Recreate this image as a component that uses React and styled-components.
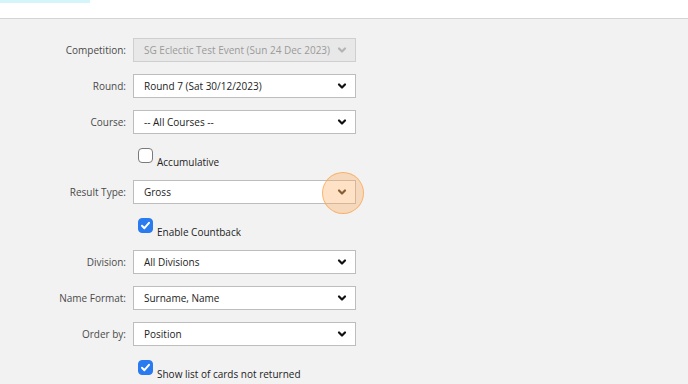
import React from "react";
import styled, { createGlobalStyle } from "styled-components";

const GlobalStyle = createGlobalStyle`
  html, body {
    margin: 0;
    padding: 0;
    background: #f2f2f2;
    font-family: "Open Sans", "Liberation Sans", sans-serif;
  }
`;

const Header = styled.div`
  height: 18px;
  background: #ffffff;
  border-bottom: 1px solid #d4d4d4;
`;

const TabLine = styled.div`
  width: 90px;
  height: 3px;
  background: #d4f6fb;
`;

const Form = styled.div`
  display: grid;
  grid-template-columns: 126px 223px;
  column-gap: 7px;
  row-gap: 12px;
  padding-top: 19px;
  align-items: center;
`;

const Label = styled.div`
  text-align: right;
  font-size: 10px;
  color: #4a4a4a;
  white-space: nowrap;
`;

const SelectBox = styled.div`
  position: relative;
  height: 24px;
  box-sizing: border-box;
  display: flex;
  align-items: center;
  justify-content: space-between;
  padding: 0 8px 0 10px;
  font-size: 10px;
  white-space: nowrap;
  background: ${({ disabled }) => (disabled ? "#e8e8e8" : "#ffffff")};
  border: 1px solid ${({ disabled }) => (disabled ? "#cfcfcf" : "#bdbdbd")};
  color: ${({ disabled }) => (disabled ? "#9a9a9a" : "#222222")};
`;

const Chevron = styled.svg`
  width: 10px;
  height: 10px;
  flex: none;
`;

const Highlight = styled.div`
  position: absolute;
  right: -9px;
  top: 50%;
  width: 40px;
  height: 40px;
  margin-top: -20px;
  border-radius: 50%;
  background: rgba(255, 170, 90, 0.35);
  border: 1.5px solid rgba(245, 165, 80, 0.75);
  pointer-events: none;
`;

const CheckRow = styled.div`
  grid-column: 2;
  height: 22px;
  display: flex;
  align-items: flex-end;
  padding-left: 5px;
  box-sizing: border-box;
  font-size: 10px;
  color: #222222;
`;

const Box = styled.span`
  width: 15px;
  height: 15px;
  box-sizing: border-box;
  border-radius: 4px;
  align-self: flex-start;
  margin-top: 2px;
  margin-right: 4px;
  display: flex;
  align-items: center;
  justify-content: center;
  background: ${({ checked }) => (checked ? "#2a7bf0" : "#ffffff")};
  border: 1px solid ${({ checked }) => (checked ? "#2a7bf0" : "#7a7a7a")};
`;

const CheckText = styled.span`
  line-height: 13px;
  margin-bottom: -1px;
`;

const ChevronIcon = ({ color }) => (
  <Chevron viewBox="0 0 10 10">
    <path
      d="M2 3.5 L5 6.5 L8 3.5"
      fill="none"
      stroke={color}
      strokeWidth="2.2"
      strokeLinecap="round"
      strokeLinejoin="round"
    />
  </Chevron>
);

const Select = ({ value, disabled, highlight }) => (
  <SelectBox disabled={disabled}>
    <span>{value}</span>
    <ChevronIcon color={disabled ? "#b4b4b4" : highlight ? "#4a3520" : "#111111"} />
    {highlight && <Highlight />}
  </SelectBox>
);

const Checkbox = ({ checked, label }) => (
  <CheckRow>
    <Box checked={checked}>
      {checked && (
        <svg width="11" height="11" viewBox="0 0 11 11">
          <path
            d="M2 5.8 L4.4 8.2 L9 2.8"
            fill="none"
            stroke="#ffffff"
            strokeWidth="2"
            strokeLinecap="round"
            strokeLinejoin="round"
          />
        </svg>
      )}
    </Box>
    <CheckText>{label}</CheckText>
  </CheckRow>
);

const fields = [
  { label: "Competition:", value: "SG Eclectic Test Event (Sun 24 Dec 2023)", disabled: true },
  { label: "Round:", value: "Round 7 (Sat 30/12/2023)" },
  { label: "Course:", value: "-- All Courses --" },
  { check: "Accumulative", checked: false },
  { label: "Result Type:", value: "Gross", highlight: true },
  { check: "Enable Countback", checked: true },
  { label: "Division:", value: "All Divisions" },
  { label: "Name Format:", value: "Surname, Name" },
  { label: "Order by:", value: "Position" },
  { check: "Show list of cards not returned", checked: true },
];

const App = () => {
  return (
    <>
      <GlobalStyle />
      <Header>
        <TabLine />
      </Header>
      <Form>
        {fields.map((f, i) =>
          f.check ? (
            <Checkbox key={i} checked={f.checked} label={f.check} />
          ) : (
            <React.Fragment key={i}>
              <Label>{f.label}</Label>
              <Select value={f.value} disabled={f.disabled} highlight={f.highlight} />
            </React.Fragment>
          )
        )}
      </Form>
    </>
  );
};

export default App;
